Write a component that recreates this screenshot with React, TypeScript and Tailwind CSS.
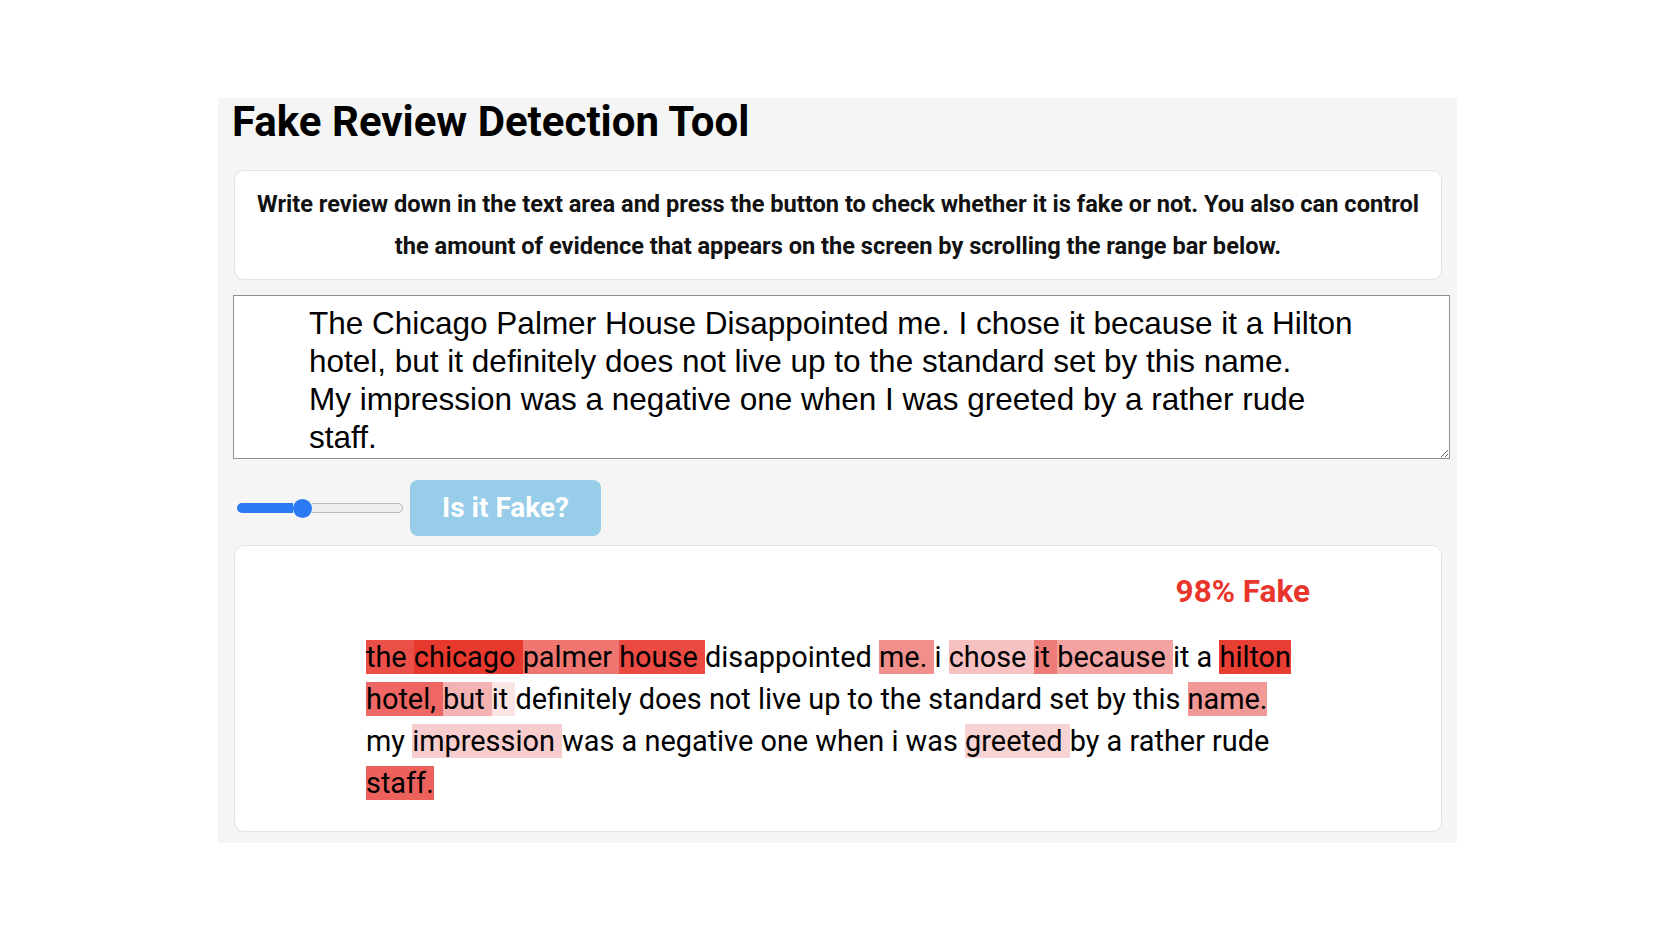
const review =
  "The Chicago Palmer House Disappointed me. I chose it because it a Hilton hotel, but it definitely does not live up to the standard set by this name.\nMy impression was a negative one when I was greeted by a rather rude staff.";

type Token = { text: string; bg?: string };

// highlighted evidence, one array per rendered line
const lines: Token[][] = [
  [
    { text: "the ", bg: "bg-[#eb5048]" },
    { text: "chicago ", bg: "bg-[#e8392f]" },
    { text: "palmer ", bg: "bg-[#ef7571]" },
    { text: "house ", bg: "bg-[#ea4a42]" },
    { text: "disappointed " },
    { text: "me. ", bg: "bg-[#f18f8d]" },
    { text: "i " },
    { text: "chose ", bg: "bg-[#f6c1c0]" },
    { text: "it ", bg: "bg-[#ef7b79]" },
    { text: "because ", bg: "bg-[#f3a3a2]" },
    { text: "it a " },
    { text: "hilton", bg: "bg-[#e83e34]" },
  ],
  [
    { text: "hotel, ", bg: "bg-[#ee6764]" },
    { text: "but ", bg: "bg-[#f4b3b2]" },
    { text: "it ", bg: "bg-[#fbe4e4]" },
    { text: "definitely does not live up to the standard set by this " },
    { text: "name.", bg: "bg-[#f19997]" },
  ],
  [
    { text: "my " },
    { text: "impression ", bg: "bg-[#f7cdce]" },
    { text: "was a negative one when i was " },
    { text: "greeted ", bg: "bg-[#f8d3d3]" },
    { text: "by a rather rude" },
  ],
  [{ text: "staff.", bg: "bg-[#ed615c]" }],
];

const Slider = () => (
  <div className="ml-[3px] flex h-[20px] w-[166px] items-center">
    <div className="h-[10px] w-[56px] rounded-l-full bg-[#2b79f3]" />
    <div className="h-[19px] w-[19px] shrink-0 rounded-full bg-[#2b79f3]" />
    <div className="h-[10px] flex-1 rounded-r-full border border-l-0 border-[#b8b8b8] bg-[#efefef]" />
  </div>
);

export default function App() {
  return (
    <div className="w-full bg-white pt-[98px] pb-[96px] font-['Roboto',sans-serif] text-black">
      <div className="ml-[218px] w-[1239px] bg-[#f5f5f5] px-[16px] pb-[11px]">
        <h1 className="-ml-[2px] text-[42px] font-bold leading-[47px]">
          Fake Review Detection Tool
        </h1>

        <div className="mt-[25px] flex h-[110px] w-[1208px] items-center justify-center rounded-[10px] border border-[#e3e3e3] bg-white">
          <p className="text-center text-[23.6px] font-bold leading-[42px] text-[#111]">
            Write review down in the text area and press the button to check whether it is fake or not. You also can control
            <br />
            the amount of evidence that appears on the screen by scrolling the range bar below.
          </p>
        </div>

        <textarea
          defaultValue={review}
          className="-ml-px mt-[15px] block h-[164px] w-[1217px] border border-[#8f8f8f] bg-white pl-[75px] pr-[88px] pt-[8px] font-['Liberation_Sans',Arial,sans-serif] text-[31.5px] leading-[38px] text-black outline-none"
        />

        <div className="mt-[21px] flex items-center gap-[7px]">
          <Slider />
          <button className="h-[56px] w-[191px] rounded-[8px] bg-[#98cde9] text-[28px] font-bold text-white">
            Is it Fake?
          </button>
        </div>

        <div className="mt-[9px] h-[287px] w-[1208px] rounded-[10px] border border-[#e3e3e3] bg-white pt-[26px]">
          <div className="mx-auto w-[944px]">
            <div className="text-right text-[31.5px] font-bold leading-[40px] text-[#e9362c]">98% Fake</div>
            <div className="mt-[24px] text-[28.9px] leading-[42px] text-black">
              {lines.map((line, i) => (
                <div key={i} className="whitespace-pre">
                  {line.map((t, j) => (
                    <span key={j} className={t.bg}>
                      {t.text}
                    </span>
                  ))}
                </div>
              ))}
            </div>
          </div>
        </div>
      </div>
    </div>
  );
}
